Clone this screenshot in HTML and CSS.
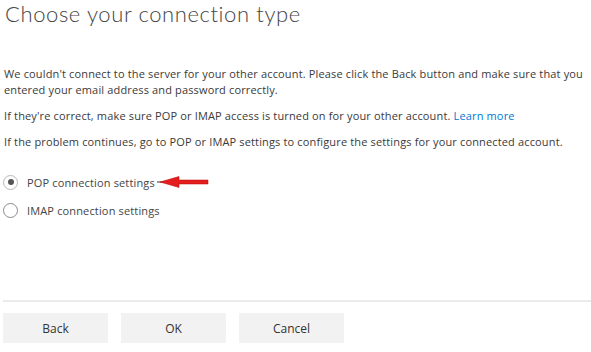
FILE: index.html
```html
<!DOCTYPE html>
<html>
<head>
<meta charset="utf-8">
<link rel="stylesheet" href="styles.css">
</head>
<body>
<div class="page">
  <h1 class="title">Choose your connection type</h1>
  <div class="body">
    <p class="para">We couldn't connect to the server for your other account. Please click the Back button and make sure that you entered your email address and password correctly.</p>
    <p class="para">If they're correct, make sure POP or IMAP access is turned on for your other account. <a class="link" href="#">Learn more</a></p>
    <p class="para">If the problem continues, go to POP or IMAP settings to configure the settings for your connected account.</p>
  </div>
  <div class="options">
    <label class="option">
      <span class="radio checked"></span>
      <span class="label">POP connection settings</span>
      <svg class="arrow" width="52" height="14" viewBox="0 0 52 14">
        <line x1="0" y1="7" x2="12" y2="7" stroke="#333" stroke-width="1"/>
        <path d="M3 7 L22 1.5 L22 5 L51 5 L51 9 L22 9 L22 12.5 Z" fill="#e41e1e" stroke="#b00" stroke-width="0.5"/>
      </svg>
    </label>
    <label class="option">
      <span class="radio"></span>
      <span class="label">IMAP connection settings</span>
    </label>
  </div>
  <div class="footer">
    <button class="btn">Back</button>
    <button class="btn">OK</button>
    <button class="btn">Cancel</button>
  </div>
</div>
</body>
</html>
```

FILE: styles.css
```css
html, body {
  margin: 0;
  padding: 0;
  background: #ffffff;
}
.page {
  width: 591px;
  height: 352px;
  display: flex;
  flex-direction: column;
  font-family: "Open Sans", "Noto Sans", sans-serif;
  color: #3a3a3a;
}
.title {
  margin: 0;
  padding-left: 5px;
  font-family: "Lato", "Open Sans", sans-serif;
  font-size: 22px;
  font-weight: 300;
  line-height: 27px;
  color: #444444;
  letter-spacing: 0.6px;
}
.body {
  margin-top: 39px;
  padding-left: 4px;
  display: flex;
  flex-direction: column;
  gap: 10px;
}
.para {
  margin: 0;
  font-size: 11px;
  letter-spacing: 0.15px;
  line-height: 16px;
}
.link {
  color: #0078d7;
  text-decoration: none;
}
.options {
  margin-top: 24px;
  display: flex;
  flex-direction: column;
  gap: 12px;
  padding-left: 3px;
}
.option {
  display: flex;
  align-items: center;
  height: 16px;
  font-size: 11px;
  letter-spacing: 0.15px;
  color: #444444;
}
.radio {
  box-sizing: border-box;
  width: 15px;
  height: 15px;
  border: 1px solid #8a8a8a;
  border-radius: 50%;
  margin-right: 9px;
  display: flex;
  align-items: center;
  justify-content: center;
}
.radio.checked {
  border-color: #b8b8b8;
}
.radio.checked::after {
  content: "";
  width: 6px;
  height: 6px;
  border-radius: 50%;
  background: #555555;
}
.arrow {
  margin-left: 2px;
}
.footer {
  margin-top: auto;
  margin-bottom: 9px;
  margin-left: 3px;
  border-top: 2px solid #ebebeb;
  padding-top: 11px;
  display: flex;
  gap: 13px;
}
.btn {
  width: 105px;
  height: 30px;
  border: none;
  background: #f2f2f2;
  font-family: "Open Sans", "Noto Sans", sans-serif;
  font-size: 12px;
  color: #333333;
  padding: 0;
}
```
